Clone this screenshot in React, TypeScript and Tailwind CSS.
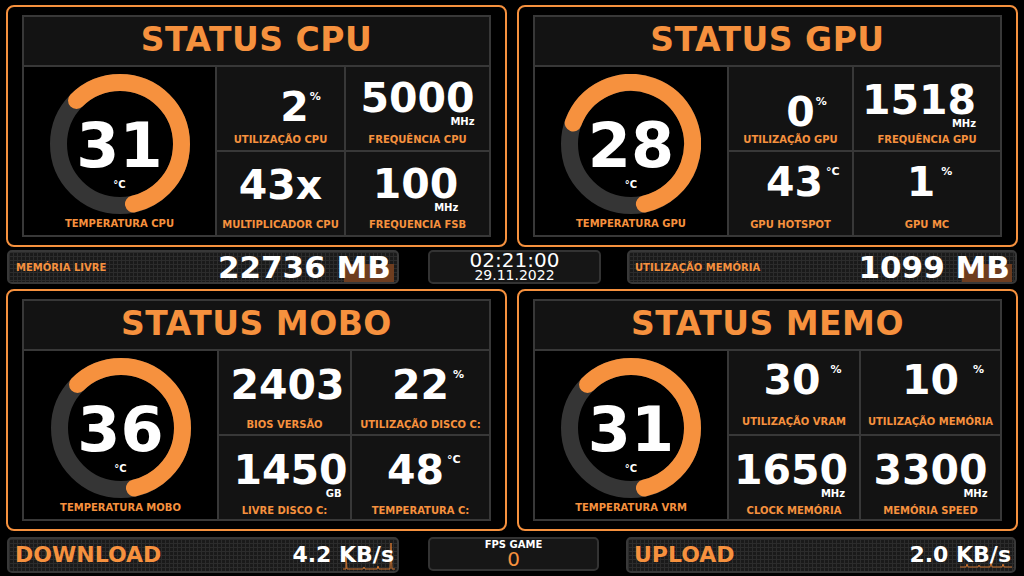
import type { ReactNode } from "react";

const ORANGE = "text-[#f6913e]";

type Cell = {
  value: string;
  label: string;
  sup?: string;
  sub?: string;
  pos: string;
  supPos?: string;
  subPos?: string;
  labelPos?: string;
};

type Panel = {
  title: string;
  temp: string;
  tempLabel: string;
  start: number;
  sweep: number;
  cols: string;
  cells: Cell[];
};

// value boxes use a 37px line box: cap top sits ~3px below the box top
const panelsTop: Panel[] = [
  {
    title: "STATUS CPU",
    temp: "31",
    tempLabel: "TEMPERATURA CPU",
    start: 225,
    sweep: 212,
    cols: "grid-cols-[191px_127px_1fr]",
    cells: [
      { value: "2", sup: "%", pos: "mt-[22px] translate-x-[14px]", label: "UTILIZAÇÃO CPU" },
      { value: "5000", sub: "MHz", subPos: "top-[37px] right-0", pos: "mt-[13px]", label: "FREQUÊNCIA CPU" },
      { value: "43x", pos: "mt-[15px]", label: "MULTIPLICADOR CPU" },
      { value: "100", sub: "MHz", subPos: "top-[37px] right-0", pos: "mt-[14px] -translate-x-[2px]", label: "FREQUENCIA FSB" }
    ]
  },
  {
    title: "STATUS GPU",
    temp: "28",
    tempLabel: "TEMPERATURA GPU",
    start: 200,
    sweep: 237,
    cols: "grid-cols-[192px_123px_1fr]",
    cells: [
      { value: "0", sup: "%", pos: "mt-[27px] translate-x-[10px]", label: "UTILIZAÇÃO GPU" },
      { value: "1518", sub: "MHz", subPos: "top-[37px] right-0", pos: "mt-[15px] -translate-x-[8px]", label: "FREQUÊNCIA GPU" },
      { value: "43", sup: "°C", supPos: "ml-[3px]", pos: "mt-[12px] translate-x-[4px]", label: "GPU HOTSPOT" },
      { value: "1", sup: "%", supPos: "ml-[6px]", pos: "mt-[12px] -translate-x-[6px]", label: "GPU MC" }
    ]
  }
];

const panelsBottom: Panel[] = [
  {
    title: "STATUS MOBO",
    temp: "36",
    tempLabel: "TEMPERATURA MOBO",
    start: 225,
    sweep: 212,
    cols: "grid-cols-[193px_131px_1fr]",
    cells: [
      { value: "2403", pos: "mt-[16px] translate-x-[3px]", label: "BIOS VERSÃO", labelPos: "mb-[3px]" },
      { value: "22", sup: "%", supPos: "ml-[4px]", pos: "mt-[16px]", label: "UTILIZAÇÃO DISCO C:", labelPos: "mb-[3px]" },
      { value: "1450", sub: "GB", subPos: "top-[37px] right-[6px]", pos: "mt-[16px] translate-x-[6px]", label: "LIVRE DISCO C:", labelPos: "mb-[2px]" },
      { value: "48", sup: "°C", supPos: "ml-[3px]", pos: "mt-[16px] -translate-x-[5px]", label: "TEMPERATURA C:", labelPos: "mb-[2px]" }
    ]
  },
  {
    title: "STATUS MEMO",
    temp: "31",
    tempLabel: "TEMPERATURA VRM",
    start: 225,
    sweep: 212,
    cols: "grid-cols-[192px_130px_1fr]",
    cells: [
      { value: "30", sup: "%", supPos: "ml-[10px]", pos: "mt-[11px] -translate-x-[2px]", label: "UTILIZAÇÃO VRAM", labelPos: "mb-[6px]" },
      { value: "10", sup: "%", supPos: "ml-[14px]", pos: "mt-[11px]", label: "UTILIZAÇÃO MEMÓRIA", labelPos: "mb-[6px]" },
      { value: "1650", sub: "MHz", subPos: "top-[37px] right-[3px]", pos: "mt-[16px] -translate-x-[3px]", label: "CLOCK MEMÓRIA", labelPos: "mb-[2px]" },
      { value: "3300", sub: "MHz", subPos: "top-[37px] right-0", pos: "mt-[16px]", label: "MEMÓRIA SPEED", labelPos: "mb-[2px]" }
    ]
  }
];

function Gauge({ value, start, sweep }: { value: string; start: number; sweep: number }) {
  const r = 61.5;
  const c = 2 * Math.PI * r;
  return (
    <div className="relative h-[140px] w-[140px]">
      <svg width="140" height="140" viewBox="0 0 140 140" className="absolute inset-0">
        <circle cx="70" cy="70" r={r} fill="none" stroke="#353535" strokeWidth="17" />
        <circle
          cx="70"
          cy="70"
          r={r}
          fill="none"
          stroke="#f6913e"
          strokeWidth="17"
          strokeLinecap="round"
          strokeDasharray={`${(c * sweep) / 360} ${c}`}
          transform={`rotate(${start} 70 70)`}
        />
      </svg>
      <div className="absolute inset-0 flex flex-col items-center pt-[41px]">
        <span className="text-[62px] font-bold leading-none text-white">{value}</span>
        <span className="mt-[2px] text-[10px] font-bold leading-[12px] text-white">°C</span>
      </div>
    </div>
  );
}

function Stat({ cell }: { cell: Cell }) {
  return (
    <div className="flex flex-col items-center bg-[#131313]">
      <div className={`relative text-[41px] font-bold leading-[37px] text-white ${cell.pos}`}>
        {cell.value}
        {cell.sup && (
          <span className={`absolute left-full top-[2px] text-[11px] font-bold leading-none ${cell.supPos ?? "ml-[1px]"}`}>
            {cell.sup}
          </span>
        )}
        {cell.sub && (
          <span className={`absolute text-[10px] font-bold leading-none ${cell.subPos}`}>{cell.sub}</span>
        )}
      </div>
      <div className={`mt-auto text-[10px] font-bold leading-[12px] ${ORANGE} ${cell.labelPos ?? "mb-[4px]"}`}>
        {cell.label}
      </div>
    </div>
  );
}

function StatusPanel({ panel }: { panel: Panel }) {
  return (
    <section className="h-[242px] w-[502px] rounded-[8px] border-2 border-[#f6913e] px-[14px] py-[8px]">
      <div className="grid h-full grid-rows-[48px_1fr] gap-[2px] bg-[#383838] p-[2px]">
        <div className="flex items-center justify-center bg-[#131313] pb-[3px]">
          <h2 className={`text-[33px] font-bold leading-none tracking-[0.5px] ${ORANGE}`}>{panel.title}</h2>
        </div>
        <div className={`grid grid-rows-2 gap-[2px] ${panel.cols}`}>
          <div className="row-span-2 flex flex-col items-center bg-black pt-[7px]">
            <Gauge value={panel.temp} start={panel.start} sweep={panel.sweep} />
            <div className={`mt-[4px] text-[10px] font-bold leading-[12px] ${ORANGE}`}>{panel.tempLabel}</div>
          </div>
          {panel.cells.map((cell) => (
            <Stat key={cell.label} cell={cell} />
          ))}
        </div>
      </div>
    </section>
  );
}

const gridBg =
  "bg-[#1a1a1a] [background-image:linear-gradient(to_right,#2c2c2c_1px,transparent_1px),linear-gradient(to_bottom,#2c2c2c_1px,transparent_1px)] [background-size:4px_4px]";

function InfoBar({ width, children, graph }: { width: string; children: ReactNode; graph?: ReactNode }) {
  return (
    <div className={`relative flex items-center justify-between overflow-hidden rounded-[5px] border-2 border-[#383838] ${gridBg} ${width}`}>
      {graph}
      {children}
    </div>
  );
}

function MemBlock() {
  return <div className="absolute bottom-0 right-[3px] h-[18px] w-[50px] bg-[#6e3d1f]" />;
}

function NetGraph({ spikes }: { spikes: string }) {
  return (
    <svg className="absolute bottom-[1px] right-[2px]" width="52" height="30" viewBox="0 0 52 30">
      <polyline points={spikes} fill="none" stroke="#c8702e" strokeWidth="1" />
    </svg>
  );
}

export default function App() {
  return (
    <div className="flex h-[576px] w-[1024px] flex-col overflow-hidden bg-black pt-[5px] font-['DejaVu_Sans',sans-serif]">
      <div className="flex gap-[10px] px-[6px]">
        {panelsTop.map((p) => (
          <StatusPanel key={p.title} panel={p} />
        ))}
      </div>

      <div className="mt-[3px] flex h-[34px] px-[7px]">
        <InfoBar width="w-[392px]" graph={<MemBlock />}>
          <span className={`relative pl-[7px] text-[10px] font-bold ${ORANGE}`}>MEMÓRIA LIVRE</span>
          <span className="relative pr-[6px] text-[31px] font-bold leading-none text-white">22736 MB</span>
        </InfoBar>
        <div className="ml-[29px] flex w-[173px] flex-col items-center justify-center rounded-[5px] border-2 border-[#333] bg-[#161616] text-white">
          <span className="text-[20px] leading-[17px]">02:21:00</span>
          <span className="text-[14px] leading-[13px]">29.11.2022</span>
        </div>
        <InfoBar width="ml-[26px] w-[390px]" graph={<MemBlock />}>
          <span className={`relative pl-[6px] text-[10px] font-bold ${ORANGE}`}>UTILIZAÇÃO MEMÓRIA</span>
          <span className="relative pr-[5px] text-[31px] font-bold leading-none text-white">1099 MB</span>
        </InfoBar>
      </div>

      <div className="mt-[5px] flex gap-[10px] px-[6px]">
        {panelsBottom.map((p) => (
          <StatusPanel key={p.title} panel={p} />
        ))}
      </div>

      <div className="mt-[6px] flex h-[36px] px-[7px]">
        <InfoBar
          width="w-[392px]"
          graph={<NetGraph spikes="0,29 3,29 3,14 4,29 20,29 21,27 22,29 34,29 35,26 36,29 47,29 48,3 49,29 52,29" />}
        >
          <span className={`relative pl-[6px] text-[22px] font-bold leading-none ${ORANGE}`}>DOWNLOAD</span>
          <span className="relative pr-[3px] text-[22px] font-bold leading-none text-white">4.2 KB/s</span>
        </InfoBar>
        <div className="ml-[29px] flex h-[34px] w-[171px] flex-col items-center justify-center rounded-[5px] border-2 border-[#333] bg-[#161616]">
          <span className="text-[10px] font-bold leading-[11px] text-white">FPS GAME</span>
          <span className={`text-[20px] leading-[19px] ${ORANGE}`}>0</span>
        </div>
        <InfoBar
          width="ml-[27px] w-[390px]"
          graph={<NetGraph spikes="0,27 6,27 7,24 8,27 18,27 19,25 20,27 30,27 31,22 32,27 42,27 43,24 44,27 52,27" />}
        >
          <span className={`relative pl-[6px] text-[22px] font-bold leading-none ${ORANGE}`}>UPLOAD</span>
          <span className="relative pr-[3px] text-[22px] font-bold leading-none text-white">2.0 KB/s</span>
        </InfoBar>
      </div>
    </div>
  );
}
